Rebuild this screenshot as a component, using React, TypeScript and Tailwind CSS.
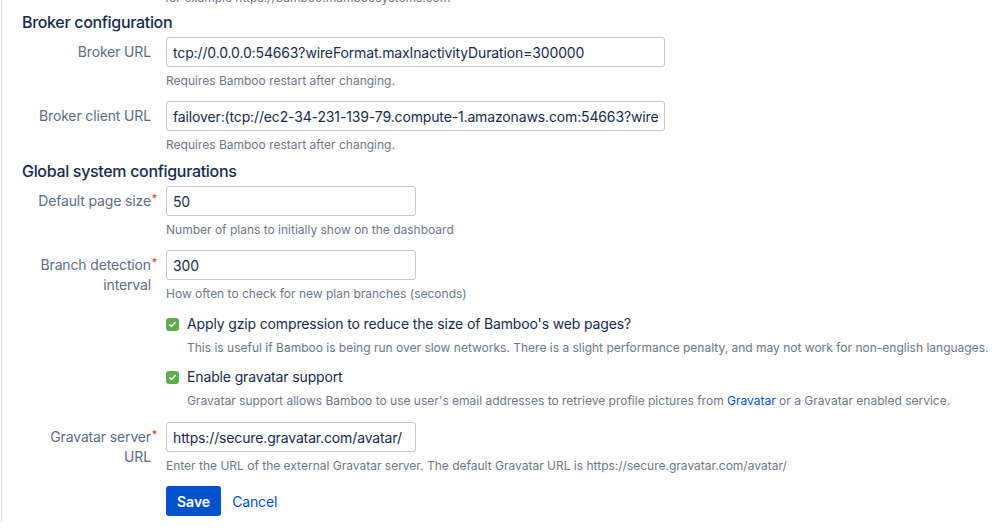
import React from 'react';

const font = "font-['Inter','Liberation_Sans',sans-serif]";

const Label = ({ text, required }: { text: React.ReactNode; required?: boolean }) => (
  <div className="w-[164px] shrink-0 pr-[15px] pt-[5px] text-right text-[14px] leading-5 tracking-[-0.01em] text-[#5e6c84]">
    <span className="relative">
      {text}
      {required && (
        <span className="absolute -right-[6px] -top-[4px] text-[11px] text-[#de350b]">*</span>
      )}
    </span>
  </div>
);

const Desc = ({ children, className = '' }: { children: React.ReactNode; className?: string }) => (
  <div className={`text-[12px] leading-4 text-[#6b778c] ${className}`}>{children}</div>
);

const Field = ({
  label,
  value,
  desc,
  required,
  wide,
}: {
  label: React.ReactNode;
  value: string;
  desc: string;
  required?: boolean;
  wide?: boolean;
}) => (
  <div className="flex mb-[12px]">
    <Label text={label} required={required} />
    <div>
      <input
        readOnly
        defaultValue={value}
        className={`block h-[30px] rounded-[3px] border border-[#c1c7d0] bg-white px-[6px] text-[14px] tracking-[-0.01em] text-[#172b4d] outline-none ${
          wide ? 'w-[499px]' : 'w-[250px]'
        }`}
      />
      <Desc className="mt-[6px]">{desc}</Desc>
    </div>
  </div>
);

const Check = ({ label, desc }: { label: string; desc: React.ReactNode }) => (
  <div className="pl-[164px]">
    <div className="flex items-center gap-[8px] text-[14px] leading-5 tracking-[-0.01em] text-[#172b4d]">
      <span className="flex h-[13px] w-[13px] items-center justify-center rounded-[3px] bg-[#5fae4b]">
        <svg width="9" height="9" viewBox="0 0 10 10" fill="none">
          <path d="M2 5.2l2 2 4-4.4" stroke="white" strokeWidth="1.6" strokeLinecap="round" strokeLinejoin="round" />
        </svg>
      </span>
      {label}
    </div>
    <Desc className="mt-[6px] pl-[21px]">{desc}</Desc>
  </div>
);

const App = () => {
  return (
    <div className={`h-[532px] w-[999px] overflow-hidden bg-white ${font}`}>
      <div className="ml-[1px] h-full border-l border-[#dfe1e6]">
        <Desc className="-mt-[10px] pl-[163px]">for example https://bamboo.mamboosystems.com</Desc>

        <h2 className="mt-[6px] mb-[5px] pl-[20px] text-[16px] font-medium leading-5 tracking-[-0.02em] text-[#172b4d]">
          Broker configuration
        </h2>
        <Field
          label="Broker URL"
          value="tcp://0.0.0.0:54663?wireFormat.maxInactivityDuration=300000"
          desc="Requires Bamboo restart after changing."
          wide
        />
        <Field
          label="Broker client URL"
          value="failover:(tcp://ec2-34-231-139-79.compute-1.amazonaws.com:54663?wireFormat.maxInactivityDuration=300000)?initialReconnectDelay=15000&maxReconnectAttempts=10"
          desc="Requires Bamboo restart after changing."
          wide
        />

        <h2 className="-mt-[4px] mb-[5px] pl-[20px] text-[16px] font-medium leading-5 tracking-[-0.02em] text-[#172b4d]">
          Global system configurations
        </h2>
        <Field
          label="Default page size"
          value="50"
          desc="Number of plans to initially show on the dashboard"
          required
        />
        <Field
          label={
            <>
              Branch detection
              <br />
              interval
            </>
          }
          value="300"
          desc="How often to check for new plan branches (seconds)"
          required
        />

        <div className="mb-[11px]">
          <Check
            label="Apply gzip compression to reduce the size of Bamboo's web pages?"
            desc="This is useful if Bamboo is being run over slow networks. There is a slight performance penalty, and may not work for non-english languages."
          />
        </div>
        <div className="mb-[13px]">
          <Check
            label="Enable gravatar support"
            desc={
              <>
                Gravatar support allows Bamboo to use user's email addresses to retrieve profile pictures from{' '}
                <a href="#" className="text-[#0052cc]">Gravatar</a> or a Gravatar enabled service.
              </>
            }
          />
        </div>

        <Field
          label={
            <>
              Gravatar server
              <br />
              URL
            </>
          }
          value="https://secure.gravatar.com/avatar/"
          desc="Enter the URL of the external Gravatar server. The default Gravatar URL is https://secure.gravatar.com/avatar/"
          required
        />

        <div className="flex items-center gap-[11px] pl-[164px]">
          <button className="h-[30px] rounded-[3px] bg-[#0052cc] px-[11px] text-[14px] font-semibold text-white">
            Save
          </button>
          <a href="#" className="text-[14px] tracking-[-0.01em] text-[#0052cc]">Cancel</a>
        </div>
      </div>
    </div>
  );
};

export default App;
